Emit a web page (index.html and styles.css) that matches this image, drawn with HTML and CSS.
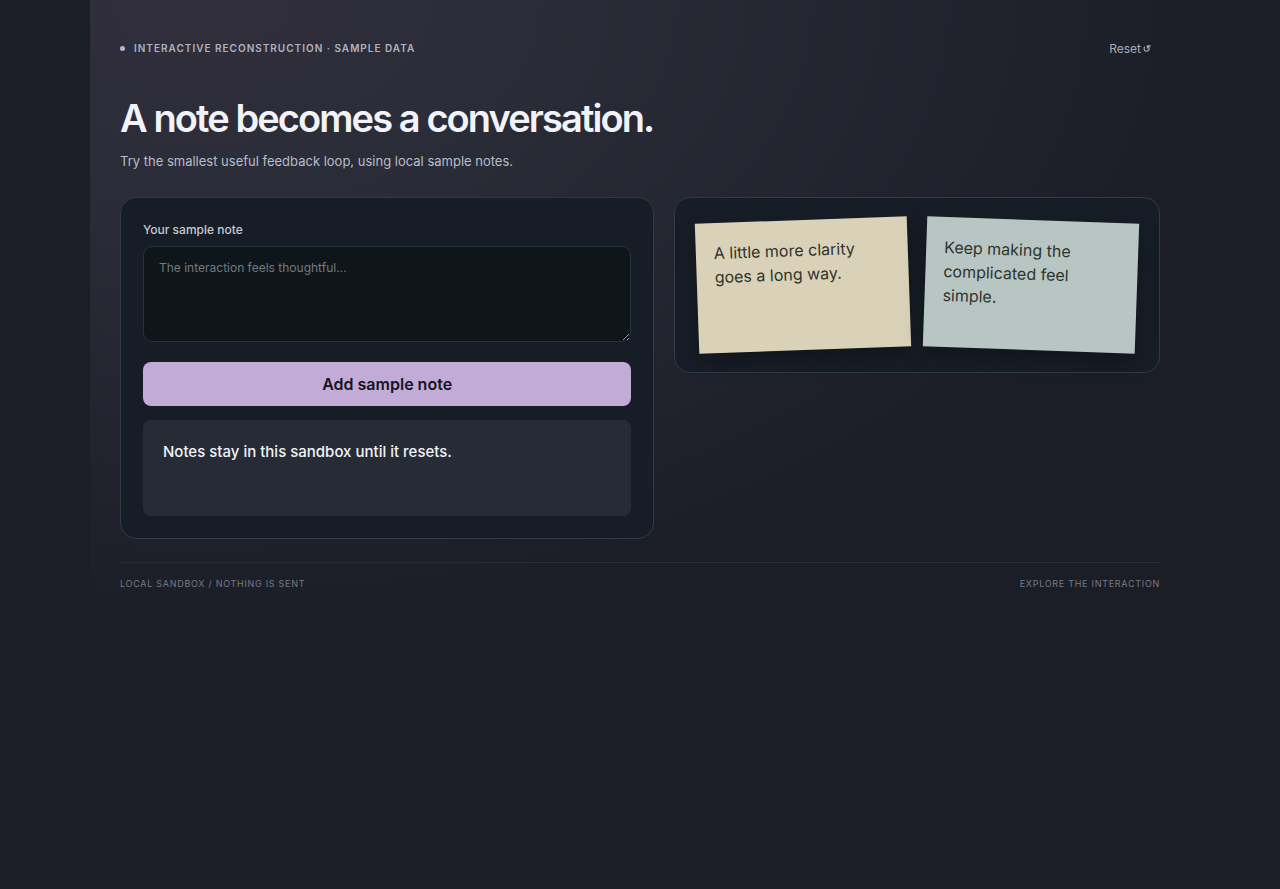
FILE: index.html
```html
<!DOCTYPE html>
<html lang="en">
<head>
    <meta charset="UTF-8">
    <meta name="viewport" content="width=device-width, initial-scale=1.0">
    <title>A note becomes a conversation.</title>
    <link rel="stylesheet" href="styles.css">
</head>
<body>

    <main class="demo">
        <header class="topbar">
            <p class="eyebrow"><span class="dot"></span>Interactive reconstruction · Sample data</p>
            <button class="reset" id="reset" type="button">Reset
                <svg class="reset-icon" viewBox="0 0 8 8" aria-hidden="true">
                    <path d="M1.6 2.6 C0.4 4.6 1.4 7.2 3.7 7.2 C6.2 7.2 7 4.4 5.2 2.2 M7.6 1.8 H4.4 V4.4"></path>
                </svg>
            </button>
        </header>

        <h1 class="title">A note becomes a conversation.</h1>
        <p class="intro">Try the smallest useful feedback loop, using local sample notes.</p>

        <div class="columns">
            <form class="card" id="note-form">
                <label class="label" for="note">Your sample note</label>
                <textarea class="field" id="note" placeholder="The interaction feels thoughtful…"></textarea>
                <button class="add" type="submit">Add sample note</button>
                <div class="result" id="result">Notes stay in this sandbox until it resets.</div>
            </form>

            <section class="card notes" id="notes">
                <div class="note">A little more clarity goes a long way.</div>
                <div class="note">Keep making the complicated feel simple.</div>
            </section>
        </div>

        <footer class="footer">
            <span>Local sandbox / Nothing is sent</span>
            <span>Explore the interaction</span>
        </footer>
    </main>

    <script>
        const form = document.getElementById("note-form");
        const field = document.getElementById("note");
        const notes = document.getElementById("notes");
        const result = document.getElementById("result");
        const startNotes = notes.innerHTML;
        const startText = result.textContent;

        form.addEventListener("submit", event => {
            event.preventDefault();
            const text = field.value.trim();
            if (!text) return;

            const note = document.createElement("div");
            note.className = "note";
            note.textContent = text;
            notes.appendChild(note);
            field.value = "";
            result.textContent = "Note added.";
        });

        document.getElementById("reset").addEventListener("click", () => {
            notes.innerHTML = startNotes;
            result.textContent = startText;
            field.value = "";
        });
    </script>

</body>
</html>
```
FILE: styles.css
```css
* {
    box-sizing: border-box;
}
body {
    margin: 0;
    background-color: #1b1d27;
    color: #f2f3f8;
    font-family: Inter, "Liberation Sans", sans-serif;
}
h1, p {
    margin: 0;
}
button, textarea {
    font-family: inherit;
}
.demo {
    max-width: 1100px;
    margin: 0 auto;
    padding: 26px 30px 22px;
    background: radial-gradient(ellipse at 10% 0%, #312e3b 0%, #2b2d38 20%, #1b1d27 72%);
}
.topbar {
    display: flex;
    align-items: center;
    justify-content: space-between;
}
.eyebrow {
    display: flex;
    align-items: center;
    gap: 9px;
    color: #b0b3bf;
    font-size: 10px;
    font-weight: 600;
    letter-spacing: 1px;
    text-transform: uppercase;
}
.dot {
    width: 5px;
    height: 5px;
    border-radius: 50%;
    background-color: #c3add8;
}
.reset {
    display: flex;
    align-items: center;
    gap: 2px;
    height: 44px;
    padding: 0 9px;
    border: 0;
    background: none;
    color: #a9acb8;
    font-size: 12px;
    cursor: pointer;
}
.reset-icon {
    width: 8px;
    height: 8px;
    fill: none;
    stroke: currentColor;
    stroke-width: 1.2;
}
.title {
    margin-top: 24px;
    font-size: 38px;
    font-weight: 600;
    line-height: 48px;
    letter-spacing: -0.05em;
}
.intro {
    margin-top: 8px;
    color: #b9bdc9;
    font-size: 13px;
    line-height: 22px;
}
.columns {
    display: grid;
    grid-template-columns: 1.1fr 1fr;
    align-items: start;
    gap: 20px;
    margin-top: 25px;
}
.card {
    padding: 22px;
    border: 1px solid #343a45;
    border-radius: 16px;
    background-color: #171d26;
}
.label {
    display: block;
    margin-bottom: 6px;
    color: #c5cad3;
    font-size: 12px;
    font-weight: 500;
    line-height: 20px;
}
.field {
    display: block;
    width: 100%;
    height: 96px;
    padding: 12px 15px;
    border: 1px solid #293139;
    border-radius: 9px;
    background-color: #0e161b;
    color: #f2f3f8;
    font-size: 12px;
    line-height: 18px;
    resize: vertical;
}
.field::placeholder {
    color: #737a7e;
}
.add {
    display: block;
    width: 100%;
    height: 44px;
    margin-top: 20px;
    border: 0;
    border-radius: 8px;
    background-color: #c3abd8;
    color: #14151d;
    font-size: 16px;
    font-weight: 600;
    cursor: pointer;
}
.result {
    min-height: 96px;
    margin-top: 14px;
    padding: 20px;
    border-radius: 8px;
    background-color: #262b36;
    font-size: 15px;
    font-weight: 500;
    line-height: 24px;
}
.notes {
    display: grid;
    grid-template-columns: 1fr 1fr;
    gap: 16px;
}
.note {
    min-height: 130px;
    padding: 18px;
    background-color: #dad2b8;
    box-shadow: 0 8px 20px rgba(0, 0, 0, 0.25);
    color: #30322d;
    font-size: 16px;
    line-height: 24px;
    transform: rotate(-2deg);
}
.note:nth-child(even) {
    background-color: #b7c6c2;
    transform: rotate(2deg);
}
.footer {
    display: flex;
    justify-content: space-between;
    margin-top: 23px;
    padding-top: 14px;
    border-top: 1px solid #2a2d36;
    color: #777a85;
    font-size: 9px;
    line-height: 14px;
    letter-spacing: 0.08em;
    text-transform: uppercase;
}
```
